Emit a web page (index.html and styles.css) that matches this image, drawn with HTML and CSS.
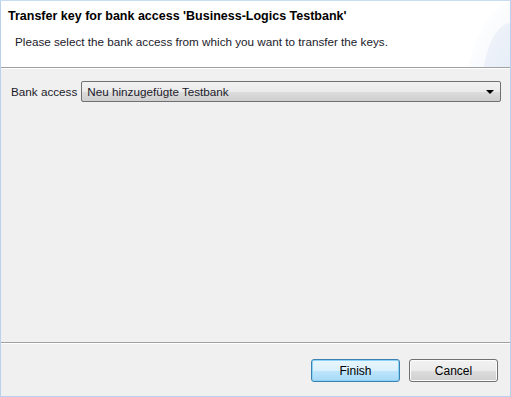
FILE: index.html
```html
<!doctype html>
<html lang="en">
<head>
  <meta charset="utf-8">
  <title>Transfer key</title>
  <link rel="stylesheet" href="styles.css">
</head>
<body>
  <div class="dialog">
    <!-- banner -->
    <div class="banner">
      <div class="banner-title">Transfer key for bank access 'Business-Logics Testbank'</div>
      <div class="banner-message">Please select the bank access from which you want to transfer the keys.</div>
      <svg class="banner-deco" width="70" height="66" viewBox="0 0 70 66">
        <defs>
          <linearGradient id="deco" x1="0" y1="0" x2="1" y2="1">
            <stop offset="0" stop-color="#ffffff" stop-opacity="0"/>
            <stop offset="1" stop-color="#dbe5f3"/>
          </linearGradient>
        </defs>
        <path d="M70 2 C52 6 36 30 28 66 L70 66 Z" fill="url(#deco)" opacity="0.5"/>
        <path d="M70 22 C58 24 48 40 44 66 L70 66 Z" fill="#e2e9f5" opacity="0.5"/>
      </svg>
    </div>

    <!-- content -->
    <div class="content">
      <div class="field">
        <label class="field-label">Bank access</label>
        <div class="combo">
          <span class="combo-text">Neu hinzugefügte Testbank</span>
          <span class="combo-arrow"></span>
        </div>
      </div>
    </div>

    <!-- buttons -->
    <div class="button-bar">
      <button class="btn btn-default">Finish</button>
      <button class="btn">Cancel</button>
    </div>
  </div>
</body>
</html>
```

FILE: styles.css
```css
html, body {
  margin: 0;
  padding: 0;
}

body {
  font-family: 'Liberation Sans', 'DejaVu Sans', sans-serif;
  font-size: 11.7px;
  color: #000;
  background-color: #fff;
}

.dialog {
  width: 511px;
  height: 397px;
  box-sizing: border-box;
  border: 1px solid #b9d1ea;
  border-top-color: #c9dcf0;
  display: flex;
  flex-direction: column;
  background-color: #f0f0f0;
}

.banner {
  position: relative;
  height: 66px;
  background-color: #fff;
  border-bottom: 1px solid #a0a0a0;
  box-shadow: 0 1px 0 #fff;
  overflow: hidden;
}

.banner-title {
  padding: 8px 0 0 7px;
  font-weight: bold;
  font-size: 12.5px;
  height: 19px;
}

.banner-message {
  padding: 7px 0 0 14px;
  color: #1a1a2a;
}

.banner-deco {
  position: absolute;
  top: 0;
  right: 0;
}

.content {
  flex: 1;
  padding: 13px 9px 0 10px;
  border-bottom: 1px solid #a0a0a0;
  box-shadow: 0 1px 0 #fff;
}

.field {
  display: flex;
  align-items: center;
  gap: 4px;
}

.field-label {
  color: #1a1a2a;
}

.combo {
  flex: 1;
  height: 19px;
  display: flex;
  align-items: center;
  justify-content: space-between;
  border: 1px solid #707070;
  border-radius: 2px;
  background: linear-gradient(#f2f2f2 0%, #ebebeb 50%, #dddddd 51%, #cfcfcf 100%);
  padding: 0 6px 0 5px;
}

.combo-text {
  color: #1a1a2a;
}

.combo-arrow {
  width: 0;
  height: 0;
  border-left: 4px solid transparent;
  border-right: 4px solid transparent;
  border-top: 4px solid #000;
}

.button-bar {
  height: 51px;
  margin-top: 2px;
  display: flex;
  justify-content: flex-end;
  align-items: flex-start;
  gap: 9px;
  padding: 14px 12px 0 0;
  box-sizing: border-box;
}

.btn {
  width: 89px;
  height: 23px;
  font-family: inherit;
  font-size: 12px;
  color: #000;
  border: 1px solid #707070;
  border-radius: 3px;
  background: linear-gradient(#f2f2f2 0%, #ebebeb 50%, #dddddd 51%, #cfcfcf 100%);
  box-shadow: inset 0 0 0 1px #fcfcfc;
  padding: 0;
}

.btn-default {
  border-color: #3c7fb1;
  background: linear-gradient(#eaf6fd 0%, #d9f0fc 50%, #bee6fd 51%, #a7d9f5 100%);
  box-shadow: inset 0 0 0 1px #8ad5f7;
}
```
